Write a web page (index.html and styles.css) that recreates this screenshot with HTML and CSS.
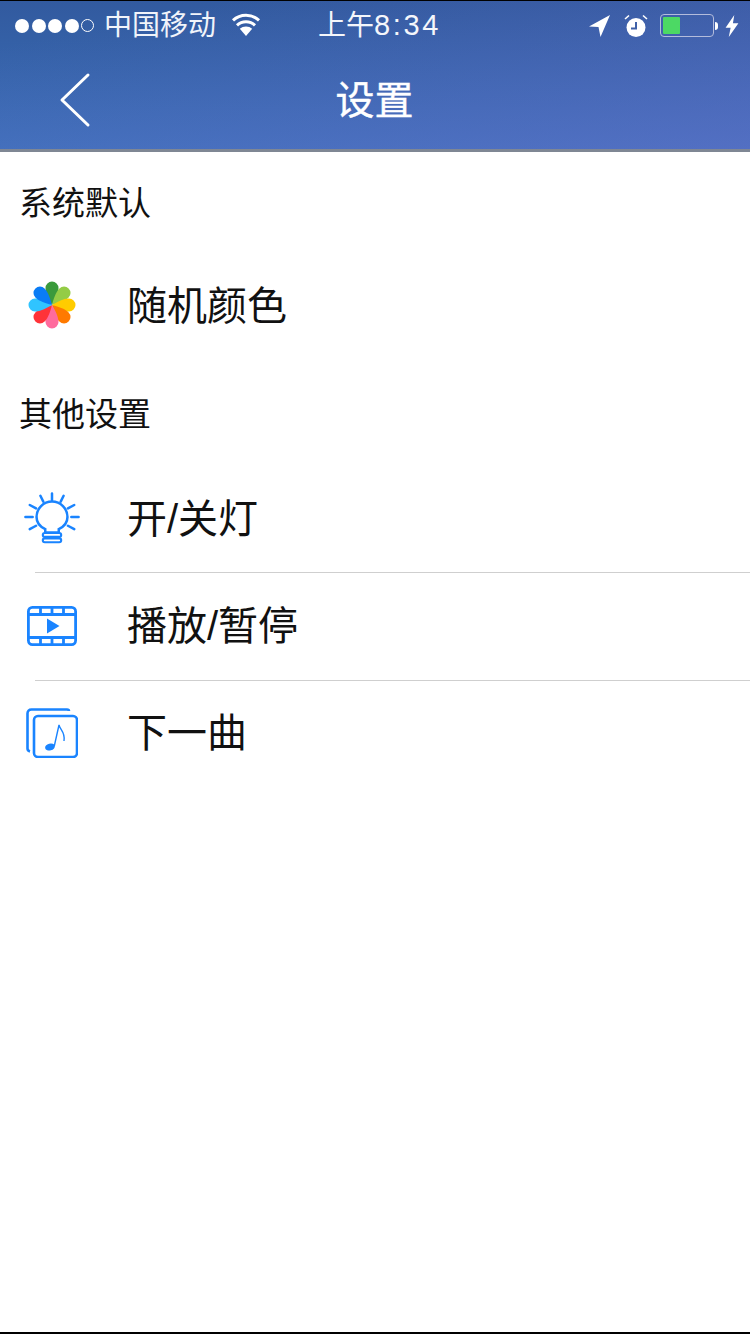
FILE: index.html
```html
<!DOCTYPE html>
<html lang="zh-CN">
<head>
<meta charset="utf-8">
<title>设置</title>
<link rel="stylesheet" href="styles.css">
</head>
<body>
<div class="page">
  <header class="header">
    <div class="status">
      <div class="status-side">
        <div class="signal"><i class="dot"></i><i class="dot"></i><i class="dot"></i><i class="dot"></i><i class="dot empty"></i></div>
        <span class="carrier">中国移动</span>
        <svg class="wifi" viewBox="0 0 30 24"><path d="M15 24 8.800 16.800a9.200 9.200 0 0 1 12.400 0Z" fill="#fff"/><path d="M6 13.400a13 13 0 0 1 18 0M2 8.400a19 19 0 0 1 26 0" fill="none" stroke="#fff" stroke-width="3"/></svg>
      </div>
      <div class="time">上午<span class="digits">8:34</span></div>
      <div class="status-side right">
        <svg class="loc" viewBox="0 0 22 22"><path d="M21 0 0 11.500 9.500 12 11.500 22Z" fill="#fff"/></svg>
        <svg class="alarm" viewBox="0 0 24 24"><circle cx="12" cy="13.500" r="9.500" fill="#fff"/><path d="M12 8v6.500H7" fill="none" stroke="#3f60a8" stroke-width="2"/><path d="M1 5 5 1.500M23 5l-4-3.500" stroke="#fff" stroke-width="1.600" fill="none"/></svg>
        <div class="battery"><div class="battery-level"></div></div>
        <i class="battery-tip"></i>
        <svg class="bolt" viewBox="0 0 14 24"><path d="M9.500 0 0 14h5.500L3.500 24 14 9H8Z" fill="#fff"/></svg>
      </div>
    </div>
    <div class="nav">
      <svg class="back" viewBox="0 0 32 56"><path d="M29 3 3 28l26 25" fill="none" stroke="#fff" stroke-width="3" stroke-linecap="round" stroke-linejoin="round"/></svg>
      <h1 class="title">设置</h1>
    </div>
  </header>

  <main class="content">
    <h2 class="section first">系统默认</h2>
    <div class="row plain">
      <div class="icon">
        <svg viewBox="0 0 50 50" width="50" height="50">
          <path d="M25 24C19.500 15 18.500 10 18.500 7a6.500 6.500 0 0 1 13 0c0 3-1 8-6.500 17Z" fill="#3a9a3c"/>
          <path d="M25 24C19.500 15 18.500 10 18.500 7a6.500 6.500 0 0 1 13 0c0 3-1 8-6.500 17Z" fill="#94cc46" transform="rotate(45 25 24)"/>
          <path d="M25 24C19.500 15 18.500 10 18.500 7a6.500 6.500 0 0 1 13 0c0 3-1 8-6.500 17Z" fill="#ffcc00" transform="rotate(90 25 24)"/>
          <path d="M25 24C19.500 15 18.500 10 18.500 7a6.500 6.500 0 0 1 13 0c0 3-1 8-6.500 17Z" fill="#ff7a00" transform="rotate(135 25 24)"/>
          <path d="M25 24C19.500 15 18.500 10 18.500 7a6.500 6.500 0 0 1 13 0c0 3-1 8-6.500 17Z" fill="#ff6b9d" transform="rotate(180 25 24)"/>
          <path d="M25 24C19.500 15 18.500 10 18.500 7a6.500 6.500 0 0 1 13 0c0 3-1 8-6.500 17Z" fill="#ff3338" transform="rotate(225 25 24)"/>
          <path d="M25 24C19.500 15 18.500 10 18.500 7a6.500 6.500 0 0 1 13 0c0 3-1 8-6.500 17Z" fill="#30c4ff" transform="rotate(270 25 24)"/>
          <path d="M25 24C19.500 15 18.500 10 18.500 7a6.500 6.500 0 0 1 13 0c0 3-1 8-6.500 17Z" fill="#0a7cf5" transform="rotate(315 25 24)"/>
        </svg>
      </div>
      <span class="label">随机颜色</span>
    </div>

    <h2 class="section">其他设置</h2>
    <div class="row">
      <div class="icon">
        <svg viewBox="0 0 60 56" width="58" height="56" fill="none" stroke="#1a84ff" stroke-width="2.600" stroke-linecap="round">
          <path d="M23 42v-3.500C16.500 35.500 14 31 14 26a16 16 0 0 1 32 0c0 5-2.500 9.500-9 12.500V42Z"/>
          <rect x="20.500" y="42.500" width="19" height="4" rx="2" stroke-width="2.200"/>
          <rect x="20.500" y="48" width="19" height="4" rx="2" stroke-width="2.200"/>
          <path d="M30 1.500v7M18 4l3 6M42 4l-3 6M7 13.500l6.500 3.500M53 13.500 46.500 17M2.500 26H10M50 26h7.500M7 38.500l6.500-3.500M53 38.500 46.500 35"/>
        </svg>
      </div>
      <span class="label">开/关灯</span>
    </div>
    <div class="row mid">
      <div class="icon">
        <svg viewBox="0 0 50 40" width="50" height="40" fill="none" stroke="#1a84ff" stroke-width="2.800">
          <rect x="1.400" y="1.400" width="47.200" height="37.200" rx="4"/>
          <path d="M1 8.500h48M1 31.500h48M13.500 1v7.500M25 1v7.500M36.500 1v7.500M13.500 31.500V39M25 31.500V39M36.500 31.500V39"/>
          <path d="M20 12.500 32.500 20 20 27.500Z" fill="#1a84ff" stroke="none"/>
        </svg>
      </div>
      <span class="label">播放/暂停</span>
    </div>
    <div class="row last">
      <div class="icon">
        <svg viewBox="0 0 52 50" width="52" height="50" fill="none" stroke="#1a84ff" stroke-width="2.600">
          <path d="M43 3C43 2 42 1.500 41 1.500H5.500C3 1.500 1.500 3 1.500 5.500v35c0 1.500.8 2.500 2.500 3"/>
          <rect x="8" y="8" width="43" height="41" rx="4" fill="#fff"/>
          <ellipse cx="24" cy="39" rx="5" ry="3.400" fill="#1a84ff" stroke="none" transform="rotate(-15 24 39)"/>
          <path d="M28.300 38 33 17c1 5 6.500 7 5 16" stroke-width="1.400"/>
        </svg>
      </div>
      <span class="label">下一曲</span>
    </div>
  </main>
</div>
</body>
</html>
```
FILE: styles.css
```css
* { box-sizing: border-box; }
html, body { margin: 0; padding: 0; background: #fff; }
body { font-family: "Liberation Sans", "Noto Sans CJK SC", sans-serif; }
.page {
  width: 750px;
  height: 1334px;
  display: flex;
  flex-direction: column;
  border-top: 1px solid #000;
  border-bottom: 2px solid #000;
  overflow: hidden;
}
.header {
  height: 151px;
  flex: none;
  background:
    linear-gradient(to bottom right, rgba(120, 110, 210, 0) 15%, rgba(120, 110, 210, .4)),
    linear-gradient(to bottom, #325a9f, #3a70b9);
  border-bottom: 3px solid #7f8794;
  color: #fff;
}
.status {
  height: 49px;
  display: grid;
  grid-template-columns: 1fr auto 1fr;
  align-items: center;
  padding: 0 11px 0 15px;
}
.status-side { display: flex; align-items: center; }
.status-side.right { justify-content: flex-end; }
.signal { display: flex; gap: 2.500px; align-items: center; margin-right: 10px; }
.dot { width: 14px; height: 14px; border-radius: 50%; background: #fff; }
.dot.empty { width: 13px; height: 13px; background: none; border: 1px solid #fff; }
.carrier { font-size: 28px; line-height: 40px; color: #f1f4fa; }
.wifi { width: 30px; height: 24px; margin-left: 15px; margin-top: -4px; }
.time { margin-left: 5px; font-size: 28px; line-height: 40px; color: #f4f6fb; }
.digits { font-size: 29px; letter-spacing: 2.600px; }
.loc { width: 22px; height: 22px; margin-right: 13px; }
.alarm { width: 24px; height: 24px; margin-right: 12px; }
.battery {
  width: 54px;
  height: 23px;
  padding: 2px;
  border: 1.500px solid #b3bcdc;
  border-radius: 4px;
}
.battery-level { width: 17px; height: 100%; background: #4cd964; border-radius: 1px; }
.battery-tip { width: 3px; height: 8px; margin-left: 1px; background: #fff; border-radius: 0 3px 3px 0; }
.bolt { width: 14px; height: 22px; margin-left: 7px; }
.nav {
  height: 99px;
  position: relative;
  display: flex;
  align-items: center;
  justify-content: center;
}
.back { position: absolute; left: 59px; top: 22px; width: 32px; height: 56px; }
.title {
  margin: 0 0 6px -1px;
  font-family: "Noto Sans CJK SC", sans-serif;
  font-size: 39px;
  font-weight: 400;
  line-height: 50px;
  color: #fff;
  -webkit-text-stroke: .4px #fff;
}
.content { flex: 1; display: flex; flex-direction: column; }
.section {
  margin: 0;
  padding: 0 19px;
  font-size: 33px;
  font-weight: 400;
  line-height: 44px;
  color: #111;
}
.section.first { padding-top: 30px; padding-bottom: 30px; }
.section:not(.first) { padding-top: 37px; padding-bottom: 28px; }
.row {
  position: relative;
  height: 108px;
  display: flex;
  align-items: center;
}
.row.plain { height: 100px; }
.row.mid { padding-bottom: 2px; }
.row.last { height: 104px; }
.row + .row::before {
  content: "";
  position: absolute;
  top: -1px;
  left: 35px;
  right: 0;
  height: 1px;
  background: #cfcfcf;
}
.icon {
  width: 127px;
  flex: none;
  display: flex;
  align-items: center;
  justify-content: center;
  padding-right: 24px;
}
.icon svg { display: block; }
.label { font-size: 40px; line-height: 50px; color: #111; }
```
